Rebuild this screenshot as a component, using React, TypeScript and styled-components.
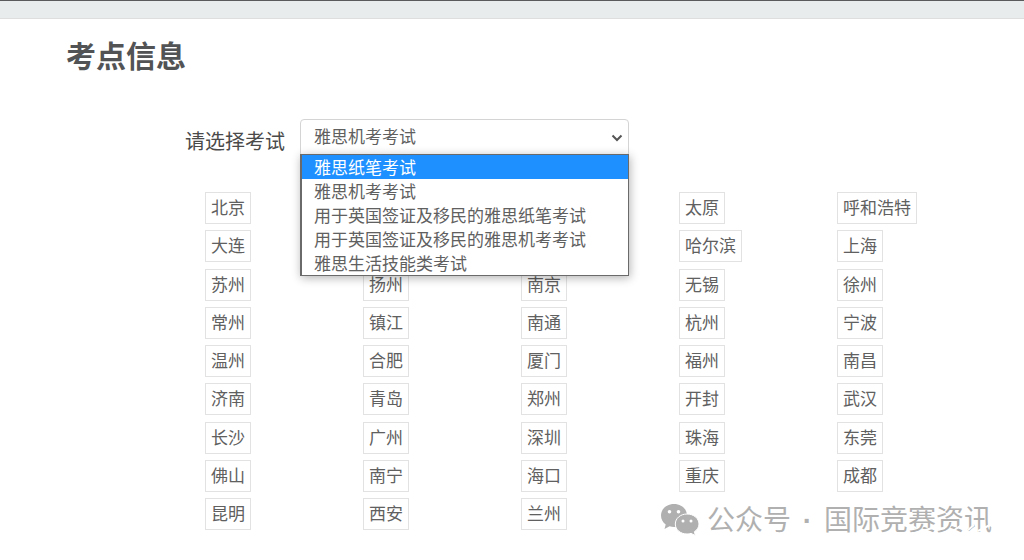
import React from "react";
import styled, { createGlobalStyle } from "styled-components";

const GlobalStyle = createGlobalStyle`
  *, *::before, *::after { box-sizing: border-box; }
  body {
    margin: 0;
    background: #fff;
    color: #606060;
    font-family: "Noto Sans CJK SC", sans-serif;
    font-size: 17px;
  }
`;

const TopBar = styled.div`
  height: 19px;
  background: #e9eced;
  border-top: 1px solid #5a5a5c;
  border-bottom: 1px solid #dededf;
`;

const Page = styled.main`
  position: relative;
  min-height: 541px;
  padding: 13px 29px 0 66px;
`;

const Title = styled.h1`
  margin: 0;
  font-size: 30px;
  line-height: 44px;
  font-weight: 700;
  color: #525355;
`;

const Field = styled.div`
  display: flex;
  align-items: center;
  gap: 15px;
  margin-top: 43px;
  padding-left: 119px;
`;

const FieldLabel = styled.label`
  padding-top: 6px;
  font-size: 20px;
  line-height: 30px;
  color: #4a4a4a;
`;

const Picker = styled.div`
  position: relative;
  flex: 0 1 329px;
`;

const Select = styled.select`
  display: block;
  width: 100%;
  height: 38px;
  padding: 0 13px 6px;
  appearance: none;
  border: 1px solid #d4d4d4;
  border-radius: 4px;
  background: #fff;
  color: inherit;
  font: inherit;
`;

const Chevron = styled.svg`
  position: absolute;
  top: 14px;
  right: 6px;
  pointer-events: none;
`;

const Menu = styled.ul`
  position: absolute;
  z-index: 1;
  top: 35px;
  left: 0;
  right: 0;
  margin: 0;
  padding: 0;
  list-style: none;
  background: #fff;
  border: 1px solid #6a6a6a;
  border-left-width: 2px;
  box-shadow: 1px 2px 9px rgba(0, 0, 0, 0.3);
`;

const Option = styled.button<{ $active: boolean }>`
  display: block;
  width: 100%;
  height: 24px;
  padding: 0 12px;
  border: 0;
  background: ${(p) => (p.$active ? "#1e90ff" : "#fff")};
  color: ${(p) => (p.$active ? "#fff" : "#606060")};
  font: inherit;
  line-height: 24px;
  text-align: left;
  white-space: nowrap;
`;

const Cities = styled.ul`
  display: grid;
  grid-template-columns: repeat(5, 1fr);
  grid-auto-rows: 32px;
  align-content: space-between;
  height: 338px;
  margin: 35px 0 0;
  padding: 0 0 0 139px;
  list-style: none;
`;

const City = styled.a`
  display: inline-block;
  height: 32px;
  padding: 0 5px;
  border: 1px solid #e2e2e2;
  color: inherit;
  line-height: 27px;
  text-decoration: none;
`;

const Watermark = styled.div`
  position: absolute;
  right: 32px;
  bottom: 19px;
  display: flex;
  align-items: center;
  gap: 8px;
  color: #b0b0b0;
  font-size: 28px;
  line-height: 40px;
`;

const Dot = styled.span`
  padding: 0 4px;
  font-family: "Liberation Sans", sans-serif;
  font-weight: 700;
  white-space: pre;
`;

const Wear = styled.svg`
  position: absolute;
  right: 0;
  bottom: 8px;
`;

const exams = [
  "雅思纸笔考试",
  "雅思机考考试",
  "用于英国签证及移民的雅思纸笔考试",
  "用于英国签证及移民的雅思机考考试",
  "雅思生活技能类考试",
];

const cities = [
  ["北京", "", "", "太原", "呼和浩特"],
  ["大连", "", "", "哈尔滨", "上海"],
  ["苏州", "扬州", "南京", "无锡", "徐州"],
  ["常州", "镇江", "南通", "杭州", "宁波"],
  ["温州", "合肥", "厦门", "福州", "南昌"],
  ["济南", "青岛", "郑州", "开封", "武汉"],
  ["长沙", "广州", "深圳", "珠海", "东莞"],
  ["佛山", "南宁", "海口", "重庆", "成都"],
  ["昆明", "西安", "兰州"],
];

function WeChatIcon() {
  return (
    <svg width="38" height="32" viewBox="1 1 38 32" aria-hidden="true">
      <path
        fill="#b0b0b0"
        d="M14 1C6.500 1 1 6 1 12.500C1 16.200 2.800 19.300 5.700 21.500L4.500 26L9.600 23.200C11 23.700 12.500 23.900 14 23.900C21.500 23.900 27 19 27 12.500S21.500 1 14 1Z"
      />
      <path
        fill="#b0b0b0"
        stroke="#fff"
        strokeWidth="1"
        d="M27 11C20.500 11 15.300 15.300 15.300 21S20.500 31 27 31C28.400 31 29.800 30.800 31 30.400L35.400 32.500L34.400 28.700C37.200 26.900 39 24.200 39 21C39 15.300 33.500 11 27 11Z"
      />
      <g fill="#fff">
        <circle cx="9.500" cy="8.800" r="1.800" />
        <circle cx="18.500" cy="8.800" r="1.800" />
        <circle cx="23" cy="18" r="1.500" />
        <circle cx="31" cy="18" r="1.500" />
      </g>
    </svg>
  );
}

export default function App() {
  return (
    <>
      <GlobalStyle />
      <TopBar />
      <Page>
        <Title>考点信息</Title>
        <Field>
          <FieldLabel htmlFor="exam">请选择考试</FieldLabel>
          <Picker>
            <Select id="exam" defaultValue={exams[1]}>
              {exams.map((e) => (
                <option key={e}>{e}</option>
              ))}
            </Select>
            <Chevron width="12" height="10" viewBox="0 0 12 10" aria-hidden="true">
              <path d="M1.500 2.500L6 7L10.500 2.500" fill="none" stroke="#555" strokeWidth="2" />
            </Chevron>
            <Menu>
              {exams.map((e, i) => (
                <li key={e}>
                  <Option type="button" $active={i === 0}>
                    {e}
                  </Option>
                </li>
              ))}
            </Menu>
          </Picker>
        </Field>
        <Cities>
          {cities.flat().map((name, i) => (
            <li key={i}>{name && <City href="#">{name}</City>}</li>
          ))}
        </Cities>
        <Watermark>
          <WeChatIcon />
          <span>
            公众号<Dot> · </Dot>国际竞赛资讯
          </span>
          <Wear width="84" height="14" viewBox="0 0 84 14" aria-hidden="true">
            <path
              d="M1 6L8 9M12 13L27 8M29 11L37 9M45 12L55 5M60 11L66 6M70 12L82 6"
              fill="none"
              stroke="#fff"
              strokeWidth="2"
            />
          </Wear>
        </Watermark>
      </Page>
    </>
  );
}
